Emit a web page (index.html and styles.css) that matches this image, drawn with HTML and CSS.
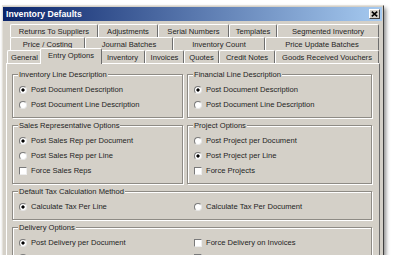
FILE: index.html
```html
<!DOCTYPE html>
<html lang="en">
<head>
    <meta charset="UTF-8">
    <title>Inventory Defaults</title>
    <link rel="stylesheet" href="styles.css">
</head>
<body>
    <div class="window">
        <!-- Title bar -->
        <div class="titlebar">
            <span class="title">Inventory Defaults</span>
            <span class="close-btn">
                <svg width="7" height="6" viewBox="0 0 7 6">
                    <path d="M0.8 0.6 L6.2 5.4 M6.2 0.6 L0.8 5.4" stroke="#000" stroke-width="1.6"/>
                </svg>
            </span>
        </div>

        <!-- Tab rows -->
        <div class="tabs">
            <div class="tab-row row-one">
                <div class="tab">Returns To Suppliers</div>
                <div class="tab">Adjustments</div>
                <div class="tab">Serial Numbers</div>
                <div class="tab">Templates</div>
                <div class="tab">Segmented Inventory</div>
            </div>
            <div class="tab-row row-two">
                <div class="tab">Price / Costing</div>
                <div class="tab">Journal Batches</div>
                <div class="tab">Inventory Count</div>
                <div class="tab">Price Update Batches</div>
            </div>
            <div class="tab-row row-three">
                <div class="tab">General</div>
                <div class="tab active">Entry Options</div>
                <div class="tab">Inventory</div>
                <div class="tab">Invoices</div>
                <div class="tab">Quotes</div>
                <div class="tab">Credit Notes</div>
                <div class="tab">Goods Received Vouchers</div>
            </div>
        </div>

        <!-- Entry Options page -->
        <div class="panel">
            <div class="columns">
                <fieldset class="group">
                    <legend>Inventory Line Description</legend>
                    <div class="option"><span class="radio checked"></span>Post Document Description</div>
                    <div class="option"><span class="radio"></span>Post Document Line Description</div>
                </fieldset>
                <fieldset class="group">
                    <legend>Financial Line Description</legend>
                    <div class="option"><span class="radio checked"></span>Post Document Description</div>
                    <div class="option"><span class="radio"></span>Post Document Line Description</div>
                </fieldset>
                <fieldset class="group">
                    <legend>Sales Representative Options</legend>
                    <div class="option"><span class="radio checked"></span>Post Sales Rep per Document</div>
                    <div class="option"><span class="radio"></span>Post Sales Rep per Line</div>
                    <div class="option"><span class="checkbox"></span>Force Sales Reps</div>
                </fieldset>
                <fieldset class="group">
                    <legend>Project Options</legend>
                    <div class="option"><span class="radio"></span>Post Project per Document</div>
                    <div class="option"><span class="radio checked"></span>Post Project per Line</div>
                    <div class="option"><span class="checkbox"></span>Force Projects</div>
                </fieldset>
            </div>

            <fieldset class="group">
                <legend>Default Tax Calculation Method</legend>
                <div class="split">
                    <div class="option"><span class="radio checked"></span>Calculate Tax Per Line</div>
                    <div class="option"><span class="radio"></span>Calculate Tax Per Document</div>
                </div>
            </fieldset>

            <fieldset class="group">
                <legend>Delivery Options</legend>
                <div class="split">
                    <div class="option"><span class="radio checked"></span>Post Delivery per Document</div>
                    <div class="option"><span class="checkbox"></span>Force Delivery on Invoices</div>
                    <div class="option"><span class="radio"></span>Post Delivery per Line</div>
                    <div class="option"><span class="checkbox"></span>Force Delivery on Credit Notes</div>
                </div>
            </fieldset>
        </div>
    </div>
</body>
</html>
```

FILE: styles.css
```css
* {
    margin: 0;
    padding: 0;
    box-sizing: border-box;
}

body {
    background-color: #ffffff;
    font-family: "Liberation Sans", Arial, sans-serif;
    font-size: 7.6px;
    color: #1e1e1e;
}

/* Window frame */
.window {
    margin: 5px 0 0 2px;
    width: 382px;
    height: 250px;
    display: flex;
    flex-direction: column;
    overflow: hidden;
    background-color: #d4d0c8;
    border-left: 1px solid #e4e1da;
    border-top: 1px solid #e4e1da;
    border-right: 1px solid #404040;
    padding: 1px 1px 0 0;
    box-shadow: 2px 3px 4px rgba(0, 0, 0, 0.45);
}

.titlebar {
    height: 14px;
    flex-shrink: 0;
    display: flex;
    align-items: center;
    justify-content: space-between;
    padding-left: 3px;
    background: linear-gradient(to right, #0a246a, #a6caf0);
}

.title {
    color: #ffffff;
    font-weight: bold;
    font-size: 8.7px;
}

.close-btn {
    width: 11px;
    height: 10px;
    margin-right: 2px;
    display: flex;
    align-items: center;
    justify-content: center;
    background-color: #d4d0c8;
    border: 1px solid;
    border-color: #ffffff #404040 #404040 #ffffff;
}

/* Tabs */
.tabs {
    margin-top: 3px;
    flex-shrink: 0;
}

.tab-row {
    display: grid;
    height: 13px;
    margin-right: 3px;
}

.row-one {
    margin-left: 7px;
    grid-template-columns: 88px 60px 71px 48px 1fr;
}

.row-two {
    margin-left: 7px;
    grid-template-columns: 75px 88px 92px 1fr;
}

.row-three {
    margin-left: 4px;
    grid-template-columns: 35px 58px 45px 39px 35px 56px 1fr;
}

.tab {
    display: flex;
    align-items: center;
    justify-content: center;
    white-space: nowrap;
    border-top: 1px solid #ffffff;
    border-left: 1px solid #ffffff;
    border-right: 1px solid #6e6e6e;
    border-radius: 2px 2px 0 0;
    background-color: #d4d0c8;
}

.row-three .tab {
    padding-top: 1px;
}

.tab.active {
    position: relative;
    z-index: 1;
    margin: -2px -2px -1px -2px;
    padding-top: 0;
    padding-bottom: 3px;
}

/* Page */
.panel {
    flex-grow: 1;
    margin: 0 2px 0 3px;
    padding: 5.5px 7px 0 5px;
    border-top: 1px solid #ffffff;
    border-left: 1px solid #ffffff;
    border-right: 1px solid #6e6e6e;
    display: flex;
    flex-direction: column;
    gap: 3px;
}

.columns {
    display: grid;
    grid-template-columns: 171px 185px;
    column-gap: 4px;
    row-gap: 3px;
}

.group {
    min-width: 0;
    padding: 2.5px 6px 4.5px 5px;
    border: 1px solid #8e8b85;
    box-shadow: 1px 1px 0 #ffffff, inset 1px 1px 0 #ffffff;
}

.group legend {
    padding: 0 1px;
    line-height: 10px;
    background-color: #d4d0c8;
}

.split {
    display: grid;
    grid-template-columns: 175px 1fr;
}

.option {
    height: 15px;
    display: flex;
    align-items: center;
    gap: 4px;
    padding-left: 1px;
    white-space: nowrap;
}

.radio {
    width: 8px;
    height: 8px;
    flex-shrink: 0;
    border-radius: 50%;
    border: 1px solid;
    border-color: #7a7a7a #e6e6e6 #e6e6e6 #7a7a7a;
    background-color: #ffffff;
}

.radio.checked {
    background: radial-gradient(circle, #000000 1.3px, #ffffff 1.9px);
}

.checkbox {
    width: 8px;
    height: 8px;
    flex-shrink: 0;
    border: 1px solid;
    border-color: #7a7a7a #eeeeee #eeeeee #7a7a7a;
    background-color: #ffffff;
}
```
